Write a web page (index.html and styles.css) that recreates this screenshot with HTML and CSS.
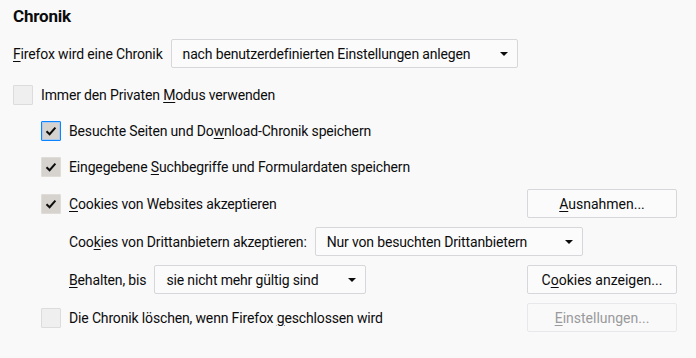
FILE: index.html
```html
<!DOCTYPE html>
<html lang="de">
<head>
<meta charset="utf-8">
<title>Chronik</title>
<link rel="stylesheet" href="styles.css">
</head>
<body>
<section class="pane">
  <h2 class="title">Chronik</h2>

  <div class="row">
    <span class="label"><u>F</u>irefox wird eine Chronik</span>
    <div class="select select-mode">
      <span class="select-text">nach benutzerdefinierten Einstellungen anlegen</span>
      <span class="arrow"></span>
    </div>
  </div>

  <div class="cbrow first">
    <span class="cb"></span>
    <span class="label">Immer den Privaten <u>M</u>odus verwenden</span>
  </div>

  <div class="sub">
    <div class="cbrow">
      <span class="cb checked focus"><svg viewBox="0 0 18 18" width="18" height="18"><path d="M4.5 9.2 L7.6 12.2 L13.4 5.6" fill="none" stroke="#0c0c0d" stroke-width="2"/></svg></span>
      <span class="label">Besuchte Seiten und Do<u>w</u>nload-Chronik speichern</span>
    </div>

    <div class="cbrow">
      <span class="cb checked"><svg viewBox="0 0 18 18" width="18" height="18"><path d="M4.5 9.2 L7.6 12.2 L13.4 5.6" fill="none" stroke="#0c0c0d" stroke-width="2"/></svg></span>
      <span class="label">Eingegebene <u>S</u>uchbegriffe und Formulardaten speichern</span>
    </div>

    <div class="row r-cookies">
      <span class="cb checked"><svg viewBox="0 0 18 18" width="18" height="18"><path d="M4.5 9.2 L7.6 12.2 L13.4 5.6" fill="none" stroke="#0c0c0d" stroke-width="2"/></svg></span>
      <span class="label"><u>C</u>ookies von Websites akzeptieren</span>
      <button class="btn"><u>A</u>usnahmen...</button>
    </div>

    <div class="sub2">
      <div class="row r-tight">
        <span class="label">Coo<u>k</u>ies von Drittanbietern akzeptieren:</span>
        <div class="select select-third">
          <span class="select-text">Nur von besuchten Drittanbietern</span>
          <span class="arrow"></span>
        </div>
      </div>

      <div class="row r-tight">
        <span class="label"><u>B</u>ehalten, bis</span>
        <div class="select select-keep">
          <span class="select-text">sie nicht mehr gültig sind</span>
          <span class="arrow"></span>
        </div>
        <button class="btn">C<u>o</u>okies anzeigen...</button>
      </div>
    </div>

    <div class="row r-tight">
      <span class="cb"></span>
      <span class="label">Die Chronik löschen, wenn Firefox <u>g</u>eschlossen wird</span>
      <button class="btn disabled" disabled><u>E</u>instellungen...</button>
    </div>
  </div>
</section>
</body>
</html>
```
FILE: styles.css
```css
html, body {
  margin: 0;
  padding: 0;
  background: #f9f9f9;
}

body {
  font-family: Roboto, "Liberation Sans", sans-serif;
  font-size: 14px;
  letter-spacing: -0.15px;
  color: #0c0c0d;
}

.pane {
  width: 664px;
  padding-left: 13px;
}

.title {
  margin: 0 0 13px 0;
  padding-top: 6px;
  font-size: 17px;
  line-height: 20px;
  height: 20px;
  font-weight: 700;
  letter-spacing: -0.2px;
}

u {
  text-decoration: underline;
  text-underline-offset: 2px;
}

.row {
  display: flex;
  align-items: center;
  height: 29px;
}

.row .label {
  margin-right: 8px;
}

.cbrow {
  display: flex;
  align-items: center;
  height: 20px;
  margin-top: 16px;
}

.cbrow.first {
  margin-top: 17px;
}

.sub {
  padding-left: 28px;
}

.sub2 {
  padding-left: 28px;
}

.r-cookies {
  margin-top: 12px;
}

.r-tight {
  margin-top: 9px;
}

.r-tight:first-child {
  margin-top: 9px;
}

.cb {
  box-sizing: border-box;
  flex: none;
  width: 20px;
  height: 20px;
  border: 1px solid #dcdcdc;
  border-radius: 1px;
  background: #efefef;
  margin-right: 8px;
  display: flex;
  align-items: center;
  justify-content: center;
}

.cb.checked {
  background: #d6d3ce;
  border-color: #e0ddd9;
}

.cb.focus {
  border-color: #0a84ff;
  box-shadow: inset 0 0 0 1px #a9c9f0;
}

.cb svg {
  display: block;
}

.select {
  box-sizing: border-box;
  height: 29px;
  border: 1px solid #d7d7db;
  border-radius: 2px;
  background: #fbfbfb;
  display: flex;
  align-items: center;
  padding: 0 9px 0 11px;
}

.select-text {
  flex: 1;
  white-space: nowrap;
}

.arrow {
  width: 0;
  height: 0;
  border-left: 4px solid transparent;
  border-right: 4px solid transparent;
  border-top: 4px solid #0c0c0d;
  flex: none;
}

.select-mode {
  width: 347px;
}

.select-third {
  width: 268px;
}

.select-keep {
  width: 212px;
}

.btn {
  box-sizing: border-box;
  margin-left: auto;
  width: 150px;
  height: 29px;
  border: 1px solid #d7d7db;
  border-radius: 2px;
  background: #fbfbfb;
  font: inherit;
  color: #0c0c0d;
  padding: 0;
  text-align: center;
}

.btn.disabled {
  color: #9a9a9c;
  border-color: #e8e8ea;
  background: #f9f9f9;
}
```
